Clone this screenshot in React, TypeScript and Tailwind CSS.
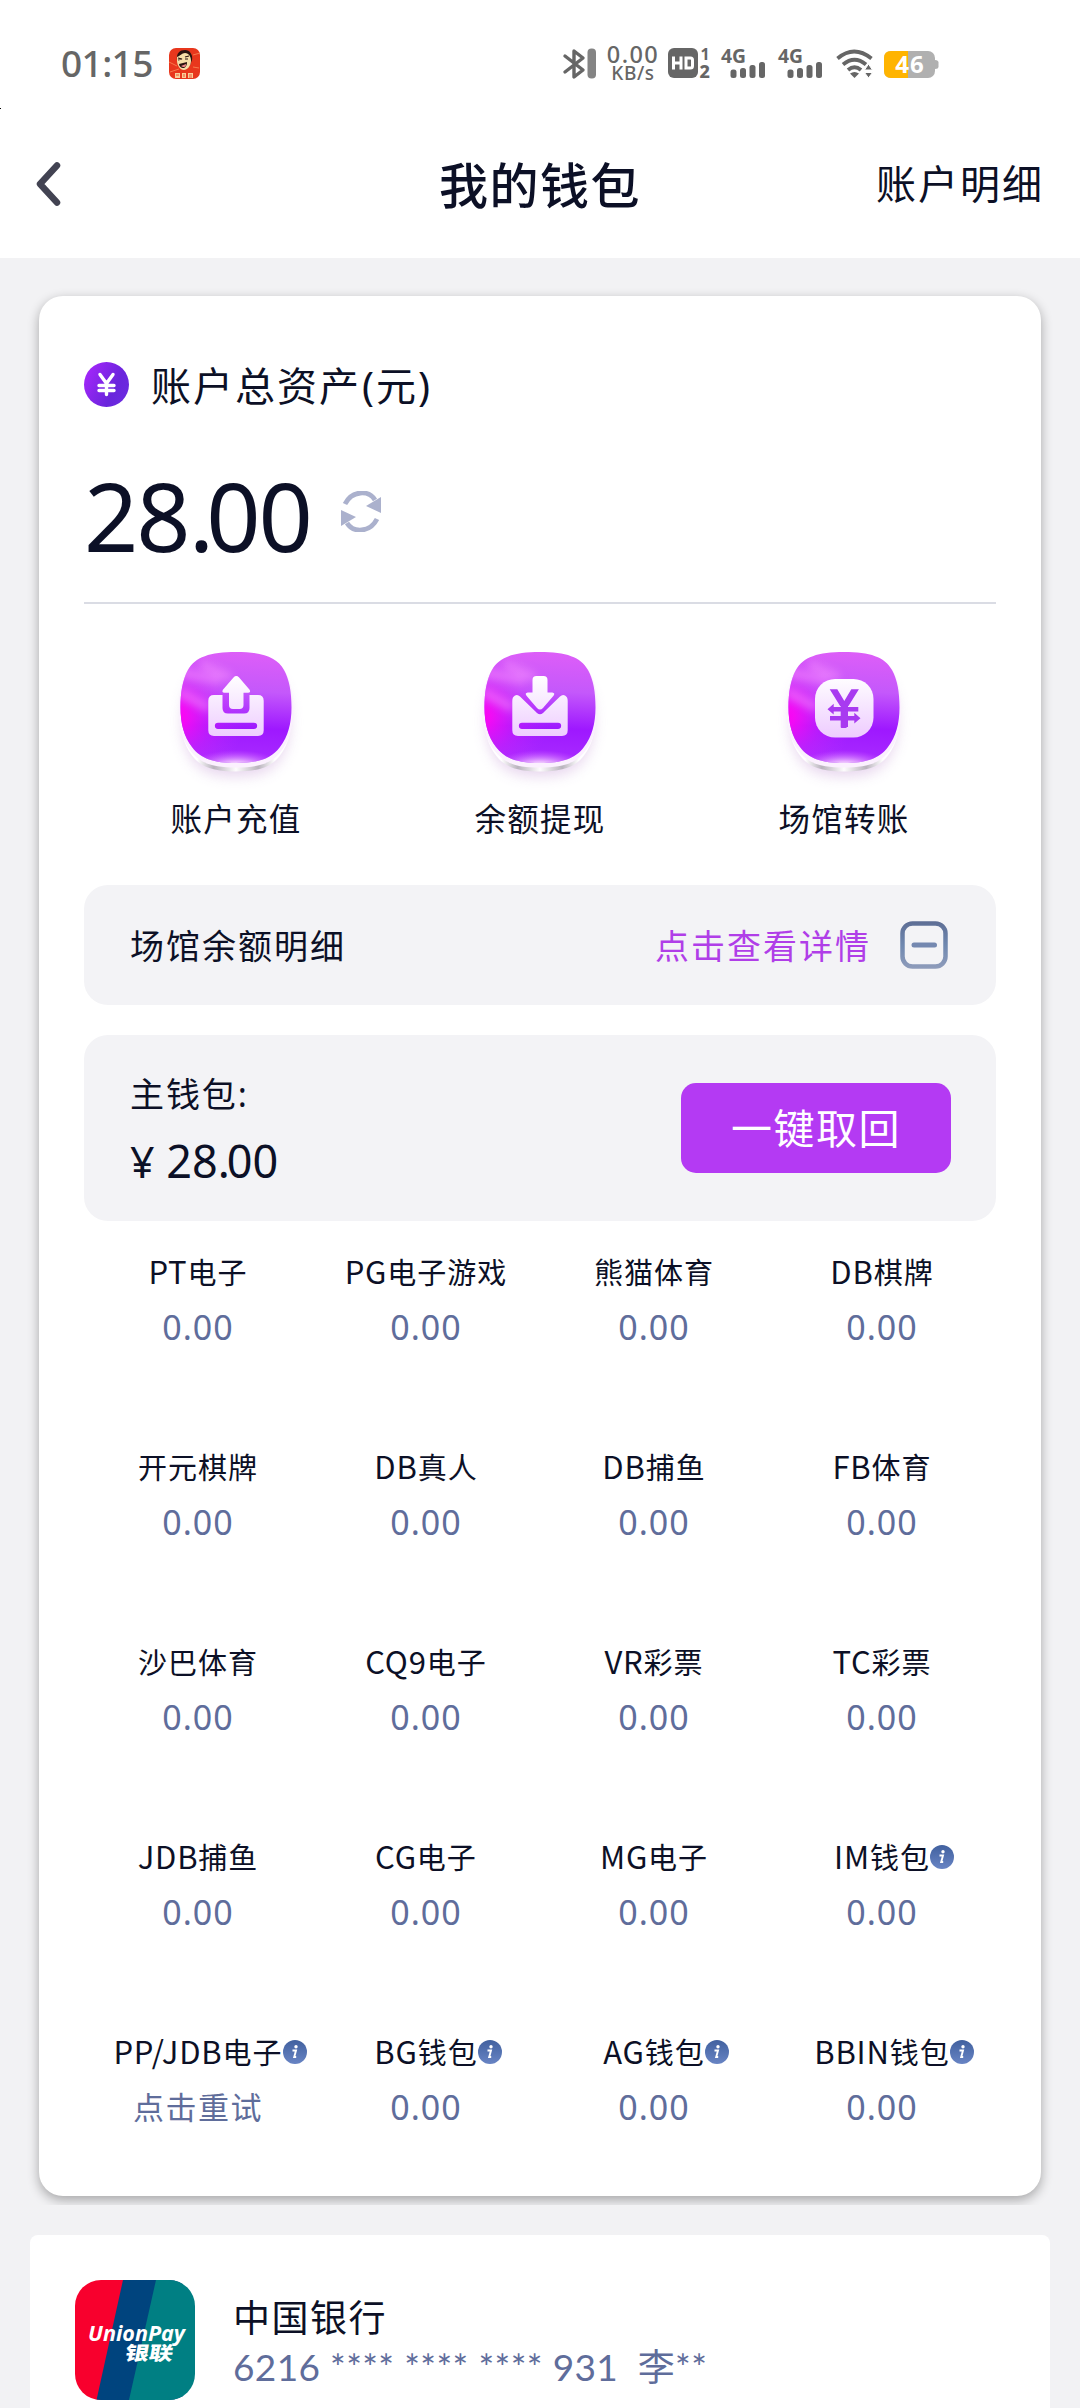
import React from "react";

const GLYPH = "url(#glyph)";

function StatusBar() {
  return (
    <div className="flex h-[126px] items-start pl-[61px] pt-[46px] text-[#666]">
      <div className="h-[34px] w-[108px] whitespace-nowrap font-['Noto_Sans',sans-serif] text-[37px] font-medium leading-[33px] tracking-[-0.6px]">
        01:15
      </div>
      <svg className="mt-[2px] h-[31px] w-[31px]" viewBox="0 0 31 31">
        <rect width="31" height="31" rx="7" fill="#e8371d" />
        <path d="M0 14l8 4M31 5l-7 2M1 24l9-3M30 20l-6-1" stroke="#f77a4d" strokeWidth="1" />
        <path d="M8 12C7 5 11 2 16 2c5 0 8 5 7 10l-2 5-12-1z" fill="#2b1410" />
        <path d="M8 9c3-1 5-4 8-4 4 0 6 4 6 8 0 5-4 9-7 9-4 0-7-5-7-9z" fill="#f6dfa8" />
        <path d="M9 10l4 1-4 1M16 9l4-1M16 11h3" stroke="#2b1410" strokeWidth="1.2" fill="none" />
        <path d="M10 16l8-2c0 4-2 6-4 6s-4-2-4-4z" fill="#2b1410" />
        <path d="M12 18l5-2c0 3-1 3-3 3z" fill="#e88" />
        <path d="M6 25h5v5H6zM13 25h4v5h-4zM19 25h5v5h-5z" fill="#f8cf9a" />
        <path d="M7 27h3M15 26v3M20 27h3M20 29h3" stroke="#e8371d" strokeWidth="0.8" />
      </svg>
      <svg className="ml-[362px] mt-[1px] h-[33px] w-[35px]" viewBox="0 0 35 33" fill="none">
        <path d="M3 9l18 14-9 7V4l9 7L3 25" stroke="#666" strokeWidth="3.4" strokeLinejoin="round" strokeLinecap="round" />
        <rect x="25.500" y="1.500" width="8.500" height="30" rx="4" fill="#848484" />
      </svg>
      <div className="ml-[8px] mt-[-2px] flex w-[56px] flex-col items-center font-['Noto_Sans',sans-serif]">
        <span className="text-[23.500px] font-medium leading-[20px] tracking-[1.400px]">0.00</span>
        <span className="text-[19px] font-medium leading-[19px] tracking-[0.6px]">KB/s</span>
      </div>
      <svg className="ml-[7px] mt-[1px] h-[32px] w-[44px] overflow-visible" viewBox="0 0 44 32">
        <rect x="0" y="1" width="30" height="30" rx="6" fill="#666" />
        <path d="M5.500 9.500v13M13 9.500v13M5.500 16H13M18 11h4.500q2 0 2 2v6q0 2-2 2H18z" stroke="#fff" strokeWidth="3" fill="none" />
        <text x="32.500" y="12.500" fontFamily="Noto Sans" fontWeight="700" fontSize="16" fill="#666">1</text>
        <text x="31.500" y="31" fontFamily="Noto Sans" fontWeight="800" fontSize="18" fill="#666">2</text>
      </svg>
      <Signal className="ml-[9px]" />
      <Signal className="ml-[11px]" />
      <svg className="ml-[12px] mt-[3px] h-[30px] w-[38px]" viewBox="0 0 38 30" fill="none">
        <g stroke="#666" strokeWidth="3.800">
          <path d="M1.500 9.500q16.500-14 34 0" />
          <path d="M7 15.500q11.500-9.500 23 0" />
          <path d="M12 21q6.500-5.500 13 0" />
        </g>
        <path d="M14 24.500q4.500-3 9 0L18.500 29z" fill="#666" />
        <path d="M32.500 15l4 6h-8zM32.500 29l4-5.500h-8z" fill="#666" stroke="#fff" strokeWidth="1" />
      </svg>
      <svg className="ml-[10px] mt-[4px] h-[29px] w-[55px] overflow-visible" viewBox="0 0 55 29">
        <rect x="0" y="1" width="51" height="27" rx="7" fill="#b0b0b0" />
        <path d="M7 1h17v27H7q-7 0-7-7V8q0-7 7-7z" fill="#ffb400" />
        <path d="M51 10q3.500 0 3.500 2.500v4q0 2.500-3.500 2.500z" fill="#b0b0b0" />
        <text x="26" y="23" textAnchor="middle" fontFamily="Noto Sans" fontWeight="700" fontSize="24" letterSpacing="1" fill="#fff">46</text>
      </svg>
    </div>
  );
}

function Signal({ className }: { className: string }) {
  return (
    <svg className={`${className} mt-[1px] h-[32px] w-[46px] overflow-visible`} viewBox="0 0 46 32" fill="#666">
      <text x="0" y="15.500" fontFamily="Noto Sans" fontWeight="700" fontSize="20" textLength="25" lengthAdjust="spacingAndGlyphs">4G</text>
      <rect x="9.500" y="22.500" width="6" height="8.500" rx="2.500" />
      <rect x="19" y="21" width="6" height="10" rx="2.500" />
      <rect x="28.500" y="18" width="6" height="13" rx="2.500" />
      <rect x="38" y="15" width="6" height="16" rx="2.500" />
    </svg>
  );
}

function Header() {
  return (
    <div className="grid h-[132px] grid-cols-[1fr_auto_1fr] items-center pl-[36px] pr-[36px]">
      <svg className="mb-[17px] h-[46px] w-[26px]" viewBox="0 0 26 46" fill="none">
        <path d="M21 4.500L4 23l17 18.500" stroke="#424352" strokeWidth="6.500" strokeLinecap="round" strokeLinejoin="round" />
      </svg>
      <h1 className="mb-[15px] whitespace-nowrap text-[49px] font-medium leading-[60px] tracking-[1.5px]">我的钱包</h1>
      <span className="mb-[16px] justify-self-end whitespace-nowrap text-[40px] leading-[60px] tracking-[2px]">账户明细</span>
    </div>
  );
}

function Defs() {
  return (
    <svg className="absolute h-0 w-0">
      <defs>
        <linearGradient id="tile" x1="0.550" y1="0" x2="0.500" y2="1">
          <stop offset="0" stopColor="#dd5ef8" />
          <stop offset="0.350" stopColor="#c458fb" />
          <stop offset="0.680" stopColor="#9e18ff" />
          <stop offset="1" stopColor="#a92cff" />
        </linearGradient>
        <radialGradient id="pink" cx="-0.040" cy="0.580" r="0.620">
          <stop offset="0" stopColor="#ff00f2" />
          <stop offset="0.150" stopColor="#fb08f4" stopOpacity="0.900" />
          <stop offset="0.550" stopColor="#e01cf8" stopOpacity="0.350" />
          <stop offset="1" stopColor="#c030ff" stopOpacity="0" />
        </radialGradient>
        <radialGradient id="shine" cx="0.500" cy="1.030" r="0.420" gradientTransform="translate(0 0.670) scale(1 0.350)">
          <stop offset="0" stopColor="#fff" />
          <stop offset="0.300" stopColor="#f4ccff" stopOpacity="0.850" />
          <stop offset="1" stopColor="#d060ff" stopOpacity="0" />
        </radialGradient>
        <linearGradient id="rim" x1="0" y1="0" x2="1" y2="0">
          <stop offset="0.150" stopColor="#fff" />
          <stop offset="0.300" stopColor="#b9b3bd" />
          <stop offset="0.500" stopColor="#fdfcfd" />
          <stop offset="0.700" stopColor="#b9b3bd" />
          <stop offset="0.850" stopColor="#fff" />
        </linearGradient>
        <linearGradient id="glyph" x1="0" y1="36" x2="0" y2="97" gradientUnits="userSpaceOnUse">
          <stop offset="0" stopColor="#fff" />
          <stop offset="1" stopColor="#eeccff" />
        </linearGradient>
        <linearGradient id="coin" x1="0" y1="0.200" x2="1" y2="0.700">
          <stop offset="0" stopColor="#a626fb" />
          <stop offset="0.700" stopColor="#6a25dc" />
          <stop offset="1" stopColor="#6b2be0" />
        </linearGradient>
        <linearGradient id="info" x1="0" y1="0" x2="0" y2="1">
          <stop offset="0" stopColor="#41619f" />
          <stop offset="1" stopColor="#6884c4" />
        </linearGradient>
        <linearGradient id="minus" x1="0" y1="0" x2="0" y2="48" gradientUnits="userSpaceOnUse">
          <stop offset="0" stopColor="#5d6d94" />
          <stop offset="0.500" stopColor="#6f88b0" />
          <stop offset="1" stopColor="#8f9cbb" />
        </linearGradient>
        <filter id="soft" x="-30%" y="-30%" width="160%" height="160%">
          <feGaussianBlur stdDeviation="7" />
        </filter>
        <filter id="streak" x="-50%" y="-50%" width="200%" height="200%">
          <feGaussianBlur stdDeviation="4" />
        </filter>
        <clipPath id="squircle">
          <path d={SQUIRCLE} />
        </clipPath>
      </defs>
    </svg>
  );
}

const SQUIRCLE =
  "M75 12C101 12 116 17 123 30C128.500 40 130.500 52 130.500 67.500C130.500 83 127 97 119 107C110 119 97 123 75 123C53 123 40 119 31 107C23 97 19.500 83 19.500 67.500C19.500 52 21.500 40 27 30C34 17 49 12 75 12Z";

function Tile({ label, children }: { label: string; children: React.ReactNode }) {
  return (
    <div className="flex flex-col items-center">
      <svg className="h-[156px] w-[150px]" viewBox="0 0 150 156" fill="none">
        <path d={SQUIRCLE} transform="translate(3 18) scale(.96)" fill="#c9a0d8" opacity="0.450" filter="url(#soft)" />
        <path d={SQUIRCLE} transform="translate(0 8.500)" fill="url(#rim)" />
        <path d={SQUIRCLE} transform="translate(-2.200 1) scale(1.029)" fill="#fbf0fe" />
        <path d={SQUIRCLE} fill="url(#tile)" />
        <path d={SQUIRCLE} fill="url(#pink)" />
        <g clipPath="url(#squircle)">
          <g filter="url(#streak)" stroke="#ff9cff" strokeWidth="8" opacity="0.500">
            <path d="M18 32l42 9" />
            <path d="M18 52l30 16" />
            <path d="M40 24l30 14" />
          </g>
        </g>
        <path d={SQUIRCLE} fill="url(#shine)" />
        {children}
      </svg>
      <span className="mt-[1px] whitespace-nowrap text-[31.500px] leading-[44px] tracking-[1.300px]">{label}</span>
    </div>
  );
}

const TRAY_SLOT = "M57 82.700h36a3.100 3.100 0 0 1 0 6.300h-36a3.100 3.100 0 0 1 0-6.300z";

function Actions() {
  return (
    <div className="grid h-[281px] grid-cols-3 pt-[36px]">
      <Tile label="账户充值">
        <path
          fillRule="evenodd"
          fill={GLYPH}
          d={
            "M53 55h8.500v13q0 5.500 5.500 5.500h16q5.500 0 5.500-5.500V55h8.500q5.700 0 5.700 5.700v29.600q0 5.700-5.700 5.700H53q-5.700 0-5.700-5.700V60.700Q47.300 55 53 55z" +
            TRAY_SLOT
          }
        />
        <path fill={GLYPH} d="M72.500 37.500q2.800-2.800 5.600 0l10.500 12.300q1.500 3-1.500 3h-4.600V65q0 4-4 4h-6.500q-4 0-4-4V52.800h-4.600q-3 0-1.500-3z" />
      </Tile>
      <Tile label="余额提现">
        <path
          fillRule="evenodd"
          fill={GLYPH}
          d={
            "M50 55.500q2.500-1.500 5 1L72 73q3 2.600 6 0l17-16.500q2.500-2.500 5-1 2.700 1.500 2.700 5.200v29.600q0 5.700-5.700 5.700H53q-5.700 0-5.700-5.700V60.700q0-3.700 2.700-5.200z" +
            TRAY_SLOT
          }
        />
        <path fill={GLYPH} d="M71.500 36h7q4 0 4 4v12.500h4.800q3.200.500 1.200 3.300L78 68q-3 3-6 0L61.500 55.800q-2-2.800 1.200-3.300h4.800V40q0-4 4-4z" />
      </Tile>
      <Tile label="场馆转账">
        <rect x="46" y="39" width="58.500" height="58.500" rx="20" fill={GLYPH} />
        <g fill="#a83af0">
          <path d="M60.700 49.300h7.600l7 11.700 7-11.700h7.600L79.500 66h-8.400z" />
          <path d="M71.700 62h7.300v25h-1q-.500 1-1.500 1h-3.800q-1 0-1-1z" />
          <path d="M58.500 69.300l6.200-5.500v3.200h24.600v4.600H64.700v3z" />
          <path d="M91.500 78.300l-6.200-5.500V76H61v4.600h24.300v3z" />
        </g>
      </Tile>
    </div>
  );
}

type Venue = { code?: string; name: string; amount?: string; info?: boolean };

const VENUES: Venue[] = [
  { code: "PT", name: "电子" },
  { code: "PG", name: "电子游戏" },
  { name: "熊猫体育" },
  { code: "DB", name: "棋牌" },
  { name: "开元棋牌" },
  { code: "DB", name: "真人" },
  { code: "DB", name: "捕鱼" },
  { code: "FB", name: "体育" },
  { name: "沙巴体育" },
  { code: "CQ9", name: "电子" },
  { code: "VR", name: "彩票" },
  { code: "TC", name: "彩票" },
  { code: "JDB", name: "捕鱼" },
  { code: "CG", name: "电子" },
  { code: "MG", name: "电子" },
  { code: "IM", name: "钱包", info: true },
  { code: "PP/JDB", name: "电子", amount: "点击重试", info: true },
  { code: "BG", name: "钱包", info: true },
  { code: "AG", name: "钱包", info: true },
  { code: "BBIN", name: "钱包", info: true },
];

function VenueCell({ code, name, amount, info }: Venue) {
  return (
    <div className="flex h-[195px] flex-col items-center pt-[28px]">
      <div className="relative h-[44px] whitespace-nowrap font-['Noto_Sans_CJK_SC',sans-serif] text-[29px] leading-[44px] tracking-[1px]">
        {code && <span className="text-[31px] tracking-[0.800px]">{code}</span>}
        {name}
        {info && (
          <svg className="absolute left-full top-[11px] h-6 w-6" viewBox="0 0 24 24">
            <circle cx="12" cy="12" r="12" fill="url(#info)" />
            <circle cx="13" cy="6.800" r="1.700" fill="#fff" />
            <path d="M9.500 10.500h3.500l-1.800 6.500h2" stroke="#fff" strokeWidth="1.900" fill="none" />
          </svg>
        )}
      </div>
      {amount ? (
        <span className="mt-[11px] whitespace-nowrap text-[31px] leading-[46px] tracking-[1.500px] text-[#5f6d9b]">{amount}</span>
      ) : (
        <span className="mt-[11px] text-[34px] leading-[46px] tracking-[1px] text-[#5f6d9b]">0.00</span>
      )}
    </div>
  );
}

function WalletCard() {
  return (
    <div className="mx-[39px] h-[1900px] rounded-[24px] bg-white px-[45px] shadow-[0_4px_12px_rgba(0,0,0,0.32)]">
      <div className="flex h-[176px] items-center">
        <svg className="h-[45px] w-[45px]" viewBox="0 0 45 45" fill="none">
          <circle cx="22.500" cy="22.500" r="22.500" fill="url(#coin)" />
          <path d="M16 12.500l6.500 9 6.500-9M22.500 21v11.500M15 23.500h15M15 28.500h15" stroke="#fff" strokeWidth="3.400" strokeLinecap="round" strokeLinejoin="round" />
        </svg>
        <span className="ml-[22px] mt-[3px] whitespace-nowrap text-[40px] leading-[60px] tracking-[2px]">
          账户总资产<span className="pl-[1px]">(元)</span>
        </span>
      </div>
      <div className="flex h-[130px] items-start">
        <span className="mt-[-2px] whitespace-nowrap text-[95px] leading-[90px] tracking-[-2px]">
          28<span className="mr-[-6px]">.</span>00
        </span>
        <svg className="ml-[30px] mt-[19px] h-[41px] w-[40px]" viewBox="0 0 40 41" fill="none">
          <path d="M4 13C11-1 28-1 34 9" stroke="#abb1cd" strokeWidth="4.800" />
          <path d="M36 28C29 42 12 42 6 32" stroke="#abb1cd" strokeWidth="4.800" />
          <path d="M40 6v16l-15-7z" fill="#abb1cd" />
          <path d="M0 35V19l15 7z" fill="#abb1cd" />
        </svg>
      </div>
      <div className="h-[2px] bg-[#dadce4]" />
      <Actions />
      <div className="flex h-[120px] items-center rounded-[24px] bg-[#f3f3f6] pl-[46px] pr-[48px]">
        <span className="mt-[2px] flex-1 whitespace-nowrap text-[34px] leading-[50px] tracking-[2px]">场馆余额明细</span>
        <span className="mt-[2px] whitespace-nowrap text-[34px] leading-[50px] tracking-[2px] text-[#b03ee8]">点击查看详情</span>
        <svg className="ml-[29px] mb-[1px] h-[48px] w-[48px]" viewBox="0 0 48 48" fill="none">
          <rect x="2.500" y="2.500" width="43" height="43" rx="10" stroke="url(#minus)" strokeWidth="4.500" />
          <rect x="11.500" y="21.500" width="25.500" height="5" rx="2.500" fill="#7488b0" />
        </svg>
      </div>
      <div className="mt-[30px] flex h-[186px] items-center justify-between rounded-[24px] bg-[#f3f3f6] pl-[46px] pr-[45px]">
        <div className="flex flex-col">
          <span className="whitespace-nowrap text-[34px] leading-[50px] tracking-[1.900px]">主钱包:</span>
          <span className="mt-[17px] whitespace-nowrap text-[45px] leading-[50px]">
            <span className="text-[43px]">¥</span> 28<span className="mr-[-3px]">.</span>00
          </span>
        </div>
        <button className="h-[90px] w-[270px] rounded-[15px] bg-[#b43af3] pt-[1px] text-[41px] tracking-[1.500px] text-white">一键取回</button>
      </div>
      <div className="grid grid-cols-4">
        {VENUES.map((v) => (
          <VenueCell key={`${v.code}${v.name}`} {...v} />
        ))}
      </div>
    </div>
  );
}

function BankCard() {
  return (
    <div className="mx-[30px] mt-[30px] flex h-[220px] items-start rounded-t-[8px] bg-white pl-[45px] pt-[45px]">
      <svg className="h-[120px] w-[120px]" viewBox="0 0 120 120">
        <clipPath id="bank">
          <rect width="120" height="120" rx="26" />
        </clipPath>
        <g clipPath="url(#bank)">
          <path fill="#f8002d" d="M0 0h60v120H0z" />
          <path fill="#00447e" d="M48 0h60v120H21.500z" />
          <path fill="#007f83" d="M81 0h39v120H54z" />
        </g>
        <text x="13" y="60.500" fontFamily="Open Sans" fontStyle="italic" fontWeight="700" fontSize="22" fill="#fff" textLength="97" lengthAdjust="spacingAndGlyphs">
          UnionPay
        </text>
        <text x="0" y="0" transform="translate(49 80) skewX(-10)" fontFamily="Noto Sans CJK SC" fontWeight="900" fontSize="19" fill="#fff" textLength="48" lengthAdjust="spacingAndGlyphs">
          银联
        </text>
      </svg>
      <div className="ml-[38px] flex flex-col pt-[11px]">
        <span className="whitespace-nowrap text-[37px] leading-[54px] tracking-[1.500px]">中国银行</span>
        <span className="whitespace-pre font-['Lato','Noto_Sans_CJK_SC',sans-serif] text-[37px] leading-[44px] tracking-[0.360px] text-[#5f6d9b]">
          6216 **** **** **** 931  李**
        </span>
      </div>
    </div>
  );
}

export default function App() {
  return (
    <div className="relative h-[2408px] w-[1080px] overflow-hidden bg-[#f2f2f4] font-['Noto_Sans','Noto_Sans_CJK_SC',sans-serif] text-[#0c1026]">
      <Defs />
      <div className="h-[258px] bg-white">
        <StatusBar />
        <Header />
        <div className="absolute left-0 top-[108px] h-px w-px bg-black" />
      </div>
      <div className="h-[1947px] overflow-hidden pt-[38px]">
        <WalletCard />
      </div>
      <BankCard />
    </div>
  );
}
